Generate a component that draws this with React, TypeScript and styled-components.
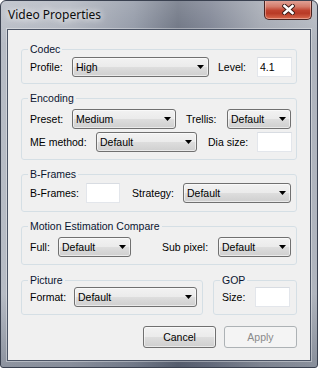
import React from "react";
import styled, { createGlobalStyle } from "styled-components";

const Global = createGlobalStyle`
  html, body { margin: 0; padding: 0; background: #ffffff; }
  body { width: 318px; height: 368px; overflow: hidden; }
`;

const Window = styled.div`
  width: 318px;
  height: 368px;
  box-sizing: border-box;
  display: flex;
  flex-direction: column;
  padding: 0 6px 6px;
  border: 1px solid #3a4150;
  border-radius: 6px 6px 3px 3px;
  background:
    linear-gradient(180deg, rgba(255,255,255,0.18) 0%, rgba(255,255,255,0) 12%, rgba(0,0,0,0) 80%, rgba(30,40,60,0.28) 100%),
    linear-gradient(90deg, #b7bcc5 0%, #aeb3bd 22%, #8f96a4 42%, #69707f 56%, #7a8090 66%, #a0a5af 82%, #b1b6bf 100%);
  font-family: "Liberation Sans", Arial, sans-serif;
  overflow: hidden;
`;

const TitleBar = styled.div`
  height: 28px;
  flex: none;
  display: flex;
  align-items: flex-start;
  justify-content: space-between;
`;

const Title = styled.span`
  margin: 7px 0 0 1px;
  font-family: "Noto Sans", "Open Sans", sans-serif;
  font-size: 12px;
  line-height: 14px;
  color: #0c0c0c;
  text-shadow: 0 0 6px rgba(255,255,255,0.95), 0 0 10px rgba(255,255,255,0.8);
`;

const CloseButton = styled.div`
  width: 48px;
  height: 20px;
  margin: -1px -1px 0 0;
  box-sizing: border-box;
  border: 1px solid #4a2320;
  border-top: none;
  border-radius: 0 0 5px 5px;
  background: linear-gradient(180deg, #e3a79c 0%, #d47b6a 35%, #c0432f 55%, #b83a26 70%, #d96a4e 100%);
  box-shadow: inset 0 0 0 1px rgba(255,220,210,0.45);
  display: flex;
  align-items: center;
  justify-content: center;
`;

const Client = styled.div`
  flex: 1;
  display: flex;
  flex-direction: column;
  gap: 8px;
  box-sizing: border-box;
  padding: 13px 13px 12px;
  background: #f0f0f0;
  border: 1px solid #4b5465;
  box-shadow: 0 0 0 1px rgba(255,255,255,0.35);
  font-size: 10.5px;
  color: #000;
`;

const Group = styled.fieldset<{ $pt: number; $pb: number; $pr?: number; $w?: number }>`
  margin: 0;
  min-width: 0;
  box-sizing: border-box;
  ${(p) => (p.$w ? `width: ${p.$w}px; flex: none;` : "")}
  border: 1px solid #d5dfe5;
  border-radius: 3px;
  padding: ${(p) => p.$pt}px ${(p) => p.$pr ?? 4}px ${(p) => p.$pb}px 8px;
  display: flex;
  flex-direction: column;
  gap: 3px;
`;

const Legend = styled.legend`
  padding: 0 2px;
  margin-left: -2px;
  font-size: 10.5px;
  line-height: 12px;
  color: #0a1530;
`;

const Row = styled.div`
  display: flex;
  align-items: center;
  height: 20px;
`;

const Pair = styled.div`
  display: flex;
  gap: 10px;
  margin-top: 1px;
`;

const Label = styled.span<{ $w: number; $ml?: number }>`
  width: ${(p) => p.$w}px;
  margin-left: ${(p) => p.$ml ?? 0}px;
  flex: none;
  white-space: nowrap;
  line-height: 12px;
`;

const Combo = styled.div<{ $w: number }>`
  width: ${(p) => p.$w}px;
  height: 20px;
  flex: none;
  box-sizing: border-box;
  border: 1px solid #707070;
  border-radius: 3px;
  background: linear-gradient(180deg, #f2f2f2 0%, #ebebeb 48%, #dddddd 52%, #cfcfcf 100%);
  box-shadow: inset 0 0 0 1px rgba(255,255,255,0.55);
  display: flex;
  align-items: center;
  justify-content: space-between;
  padding: 0 4px 0 3px;
  white-space: nowrap;
`;

const Field = styled.div<{ $w: number }>`
  width: ${(p) => p.$w}px;
  height: 20px;
  flex: none;
  box-sizing: border-box;
  background: #ffffff;
  border: 1px solid #e3e6eb;
  border-top-color: #d8dce2;
  display: flex;
  align-items: center;
  padding-left: 2px;
`;

const ButtonRow = styled.div`
  display: flex;
  justify-content: flex-end;
  gap: 8px;
  margin-top: 3px;
`;

const Button = styled.div<{ $disabled?: boolean }>`
  width: 73px;
  height: 22px;
  box-sizing: border-box;
  border-radius: 3px;
  display: flex;
  align-items: center;
  justify-content: center;
  font-size: 10.5px;
  border: 1px solid ${(p) => (p.$disabled ? "#adb2b5" : "#707070")};
  color: ${(p) => (p.$disabled ? "#8a8a8a" : "#000")};
  background: ${(p) =>
    p.$disabled
      ? "#f4f4f4"
      : "linear-gradient(180deg, #f2f2f2 0%, #ebebeb 48%, #dddddd 52%, #cfcfcf 100%)"};
  box-shadow: ${(p) => (p.$disabled ? "none" : "inset 0 0 0 1px rgba(255,255,255,0.55)")};
`;

const Arrow = () => (
  <svg width="7" height="4" viewBox="0 0 7 4">
    <polygon points="0,0 7,0 3.5,4" fill="#000" />
  </svg>
);

const Select = ({ w, value }: { w: number; value: string }) => (
  <Combo $w={w}>
    <span>{value}</span>
    <Arrow />
  </Combo>
);

const CloseGlyph = () => (
  <svg width="13" height="11" viewBox="0 0 13 11">
    <path
      d="M2.5 2 L10.5 9 M10.5 2 L2.5 9"
      stroke="#3b1a16"
      strokeWidth="4.4"
      strokeLinecap="square"
    />
    <path
      d="M2.5 2 L10.5 9 M10.5 2 L2.5 9"
      stroke="#ffffff"
      strokeWidth="2.6"
      strokeLinecap="square"
    />
  </svg>
);

export default function App() {
  return (
    <>
      <Global />
      <Window>
        <TitleBar>
          <Title>Video Properties</Title>
          <CloseButton>
            <CloseGlyph />
          </CloseButton>
        </TitleBar>
        <Client>
          <Group $pt={2} $pb={6}>
            <Legend>Codec</Legend>
            <Row>
              <Label $w={42}>Profile:</Label>
              <Select w={137} value="High" />
              <Label $w={39} $ml={9}>Level:</Label>
              <Field $w={35}>4.1</Field>
            </Row>
          </Group>

          <Group $pt={5} $pb={7}>
            <Legend>Encoding</Legend>
            <Row>
              <Label $w={42}>Preset:</Label>
              <Select w={104} value="Medium" />
              <Label $w={41} $ml={10}>Trellis:</Label>
              <Select w={64} value="Default" />
            </Row>
            <Row>
              <Label $w={66}>ME method:</Label>
              <Select w={101} value="Default" />
              <Label $w={49} $ml={11}>Dia size:</Label>
              <Field $w={35} />
            </Row>
          </Group>

          <Group $pt={3} $pb={8}>
            <Legend>B-Frames</Legend>
            <Row>
              <Label $w={56}>B-Frames:</Label>
              <Field $w={34} />
              <Label $w={51} $ml={12}>Strategy:</Label>
              <Select w={108} value="Default" />
            </Row>
          </Group>

          <Group $pt={5} $pb={7}>
            <Legend>Motion Estimation Compare</Legend>
            <Row>
              <Label $w={28}>Full:</Label>
              <Select w={73} value="Default" />
              <Label $w={56} $ml={31}>Sub pixel:</Label>
              <Select w={73} value="Default" />
            </Row>
          </Group>

          <Pair>
            <Group $pt={1} $pb={7} $pr={5} $w={182}>
              <Legend>Picture</Legend>
              <Row>
                <Label $w={44}>Format:</Label>
                <Select w={123} value="Default" />
              </Row>
            </Group>
            <Group $pt={1} $pb={7} $pr={6} $w={84}>
              <Legend>GOP</Legend>
              <Row>
                <Label $w={33}>Size:</Label>
                <Field $w={35} />
              </Row>
            </Group>
          </Pair>

          <ButtonRow>
            <Button>Cancel</Button>
            <Button $disabled>Apply</Button>
          </ButtonRow>
        </Client>
      </Window>
    </>
  );
}
